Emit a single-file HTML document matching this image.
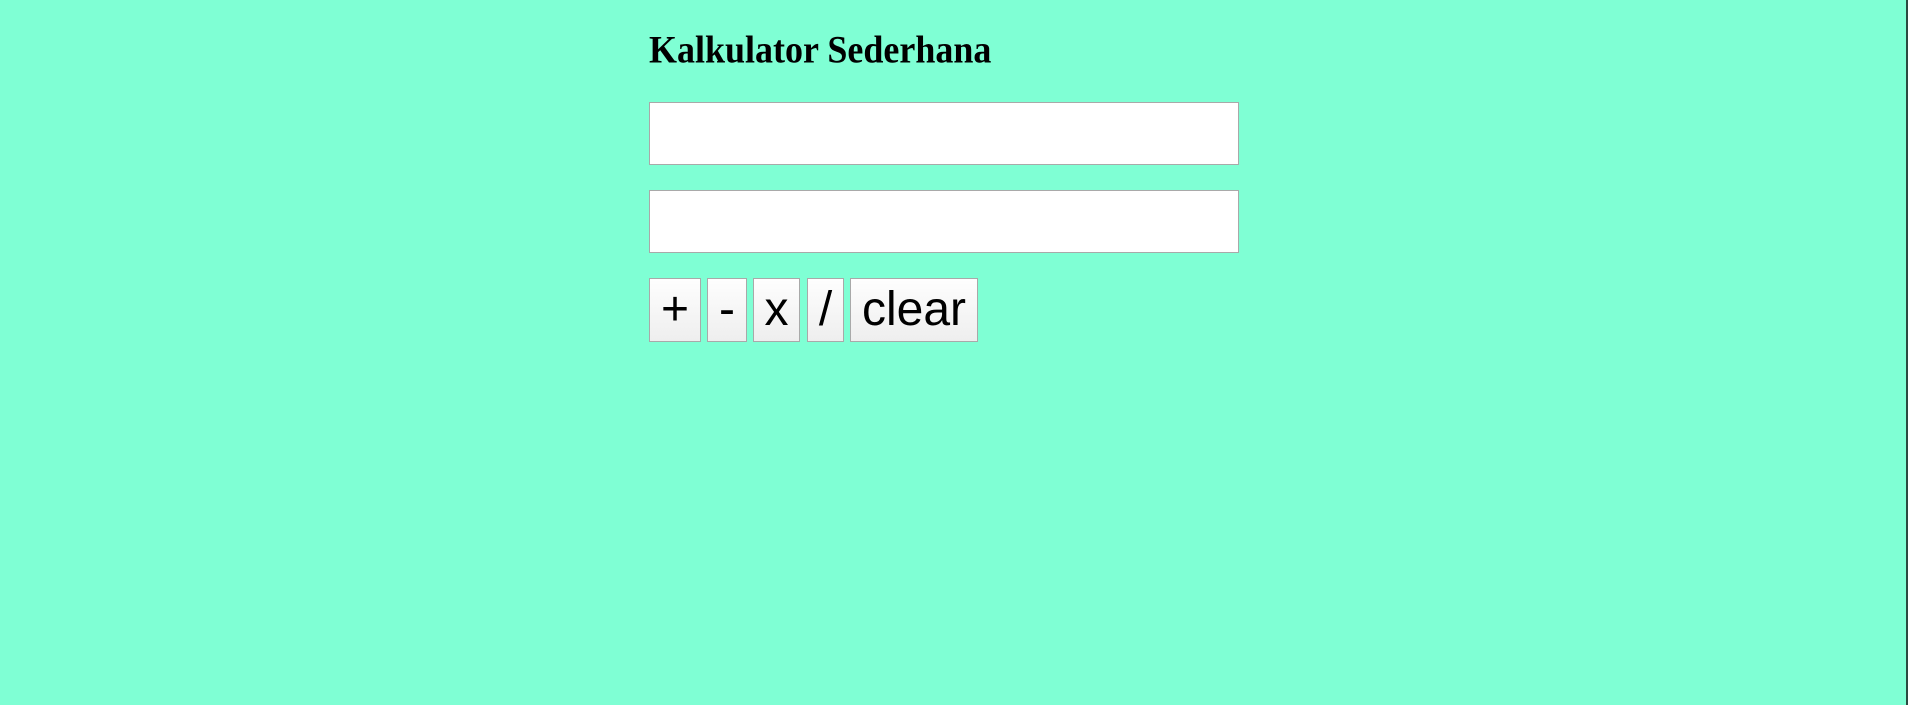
<!DOCTYPE html>
<html><head><style>
html,body{margin:0;padding:0;}
body{width:1908px;height:705px;background:#7fffd4;position:relative;overflow:hidden;}
.edge{position:absolute;right:0;top:0;width:2px;height:705px;background:#2a4a40;}
h1{position:absolute;left:649px;top:33px;margin:0;font:bold 36px/36px "Liberation Serif",serif;color:#000;white-space:nowrap;transform:scaleY(1.08);transform-origin:left bottom;}
.in{position:absolute;left:649px;width:588px;height:61px;background:#fff;border:1px solid #a9a9a9;}
.b{position:absolute;top:278px;height:62px;border:1px solid #a9a9a9;background:linear-gradient(#fefefe,#eeeeee);font:48px/62px "Liberation Sans",Arial,sans-serif;color:#000;text-align:center;box-sizing:content-box;}
</style></head><body>
<div class="edge"></div>
<h1>Kalkulator Sederhana</h1>
<div class="in" style="top:102px"></div>
<div class="in" style="top:190px"></div>
<div class="b" style="left:649px;width:50px">+</div>
<div class="b" style="left:707px;width:38px">-</div>
<div class="b" style="left:753px;width:45px">x</div>
<div class="b" style="left:807px;width:35px">/</div>
<div class="b" style="left:850px;width:126px">clear</div>
</body></html>
